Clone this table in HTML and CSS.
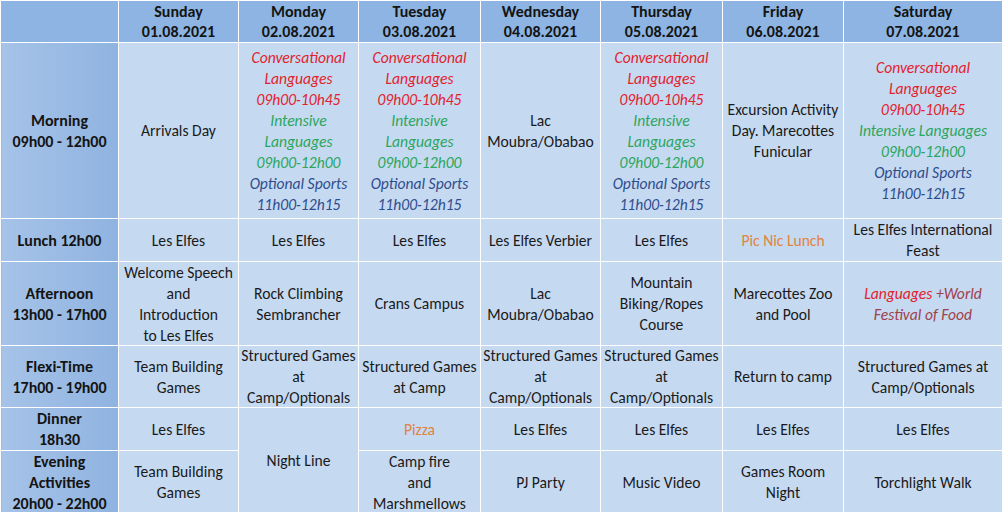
FILE: index.html
```html
<!DOCTYPE html>
<html>
<head>
<meta charset="utf-8">
<link rel="stylesheet" href="styles.css">
</head>
<body>
<table class="schedule">
  <colgroup>
    <col class="c-head">
    <col class="c-sun">
    <col class="c-mon">
    <col class="c-tue">
    <col class="c-wed">
    <col class="c-thu">
    <col class="c-fri">
    <col class="c-sat">
  </colgroup>
  <tr class="r-days">
    <th class="corner"></th>
    <th class="day">Sunday<br>01.08.2021</th>
    <th class="day">Monday<br>02.08.2021</th>
    <th class="day">Tuesday<br>03.08.2021</th>
    <th class="day">Wednesday<br>04.08.2021</th>
    <th class="day">Thursday<br>05.08.2021</th>
    <th class="day">Friday<br>06.08.2021</th>
    <th class="day">Saturday<br>07.08.2021</th>
  </tr>
  <tr class="r-morning">
    <th class="slot">Morning<br>09h00 - 12h00</th>
    <td>Arrivals Day</td>
    <td class="it"><div class="tight"><span class="red">Conversational<br>Languages<br>09h00-10h45</span><br><span class="green">Intensive<br>Languages<br>09h00-12h00</span><br><span class="blue">Optional Sports<br>11h00-12h15</span></div></td>
    <td class="it"><div class="tight"><span class="red">Conversational<br>Languages<br>09h00-10h45</span><br><span class="green">Intensive<br>Languages<br>09h00-12h00</span><br><span class="blue">Optional Sports<br>11h00-12h15</span></div></td>
    <td>Lac<br>Moubra/Obabao</td>
    <td class="it"><div class="tight"><span class="red">Conversational<br>Languages<br>09h00-10h45</span><br><span class="green">Intensive<br>Languages<br>09h00-12h00</span><br><span class="blue">Optional Sports<br>11h00-12h15</span></div></td>
    <td>Excursion Activity<br>Day. Marecottes<br>Funicular</td>
    <td class="it"><span class="red">Conversational<br>Languages<br>09h00-10h45</span><br><span class="green">Intensive Languages<br>09h00-12h00</span><br><span class="blue">Optional Sports<br>11h00-12h15</span></td>
  </tr>
  <tr class="r-lunch">
    <th class="slot">Lunch 12h00</th>
    <td>Les Elfes</td>
    <td>Les Elfes</td>
    <td>Les Elfes</td>
    <td>Les Elfes Verbier</td>
    <td>Les Elfes</td>
    <td class="orange">Pic Nic Lunch</td>
    <td>Les Elfes International<br>Feast</td>
  </tr>
  <tr class="r-afternoon">
    <th class="slot">Afternoon<br>13h00 - 17h00</th>
    <td><div class="tight">Welcome Speech<br>and<br>Introduction<br>to Les Elfes</div></td>
    <td>Rock Climbing<br>Sembrancher</td>
    <td>Crans Campus</td>
    <td>Lac<br>Moubra/Obabao</td>
    <td>Mountain<br>Biking/Ropes<br>Course</td>
    <td>Marecottes Zoo<br>and Pool</td>
    <td class="it"><span class="red">Languages</span> <span class="maroon">+World<br>Festival of Food</span></td>
  </tr>
  <tr class="r-flexi">
    <th class="slot">Flexi-Time<br>17h00 - 19h00</th>
    <td>Team Building<br>Games</td>
    <td><div class="tight">Structured Games<br>at<br>Camp/Optionals</div></td>
    <td>Structured Games<br>at Camp</td>
    <td><div class="tight">Structured Games<br>at<br>Camp/Optionals</div></td>
    <td><div class="tight">Structured Games<br>at<br>Camp/Optionals</div></td>
    <td>Return to camp</td>
    <td>Structured Games at<br>Camp/Optionals</td>
  </tr>
  <tr class="r-dinner">
    <th class="slot"><div class="tight">Dinner<br>18h30</div></th>
    <td>Les Elfes</td>
    <td rowspan="2">Night Line</td>
    <td class="orange">Pizza</td>
    <td>Les Elfes</td>
    <td>Les Elfes</td>
    <td>Les Elfes</td>
    <td>Les Elfes</td>
  </tr>
  <tr class="r-evening">
    <th class="slot"><div class="tight">Evening<br>Activities<br>20h00 - 22h00</div></th>
    <td>Team Building<br>Games</td>
    <td><div class="tight">Camp fire<br>and<br>Marshmellows</div></td>
    <td>PJ Party</td>
    <td>Music Video</td>
    <td>Games Room<br>Night</td>
    <td>Torchlight Walk</td>
  </tr>
</table>
</body>
</html>
```

FILE: styles.css
```css
html, body {
  margin: 0;
  padding: 0;
  background: #c5d9f1;
}

.schedule {
  border-collapse: collapse;
  table-layout: fixed;
  width: 1002px;
  height: 512px;
  font-family: "Carlito", "Calibri", "Lato", sans-serif;
  font-size: 15.6px;
  line-height: 21px;
  color: #1a1a1a;
}

.c-head { width: 118px; }
.c-sun { width: 120px; }
.c-mon { width: 120px; }
.c-tue { width: 122px; }
.c-wed { width: 120px; }
.c-thu { width: 122px; }
.c-fri { width: 121px; }
.c-sat { width: 159px; }

.r-days { height: 42px; }
.r-morning { height: 176px; }
.r-lunch { height: 42px; }
.r-afternoon { height: 84px; }
.r-flexi { height: 62px; }
.r-dinner { height: 43px; }
.r-evening { height: 63px; }

.schedule th,
.schedule td {
  border: 1px solid #ffffff;
  padding: 0;
  text-align: center;
  vertical-align: middle;
  white-space: nowrap;
  overflow: hidden;
}

.schedule td {
  background: #c5d9f1;
}

.tight {
  margin: -3px 0;
}

.day {
  background: #8db4e2;
  font-weight: bold;
  font-size: 16px;
  line-height: 20px;
  color: #141414;
}

.corner {
  background: #8db4e2;
}

.slot {
  background: linear-gradient(to right, #a6c3e8 0%, #8fb3e0 100%);
  font-weight: bold;
  font-size: 16px;
  color: #141414;
}

.it {
  font-style: italic;
}

.red { color: #e3222c; }
.green { color: #2ba65d; }
.blue { color: #2f4d8c; }
.maroon { color: #a0404b; }
.orange { color: #e2843f; }
```
